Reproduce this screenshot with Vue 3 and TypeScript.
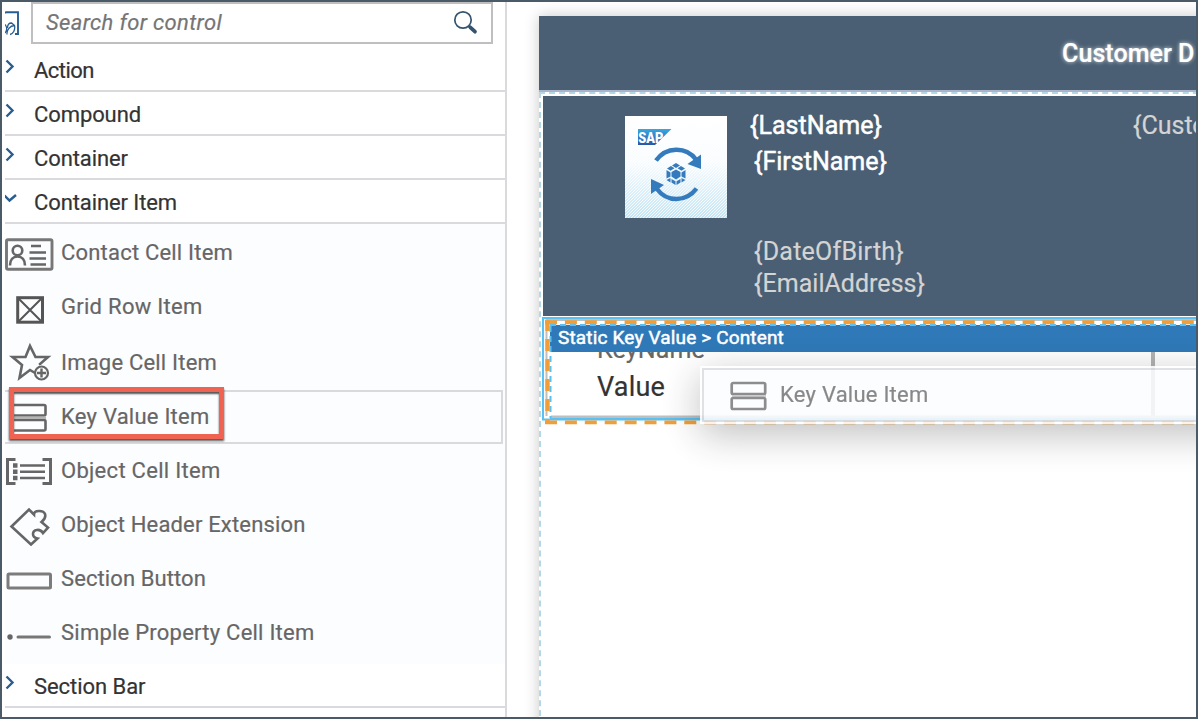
<script setup lang="ts">
interface PaletteItem {
  label: string
  icon: string
  width: number
  active?: boolean
}
interface Group {
  label: string
  width: number
  open?: boolean
  items?: PaletteItem[]
}

const groups: Group[] = [
  { label: 'Action', width: 60 },
  { label: 'Compound', width: 107 },
  { label: 'Container', width: 94 },
  {
    label: 'Container Item',
    width: 143,
    open: true,
    items: [
      { label: 'Contact Cell Item', icon: 'contact', width: 172 },
      { label: 'Grid Row Item', icon: 'grid', width: 141.5 },
      { label: 'Image Cell Item', icon: 'image', width: 156 },
      { label: 'Key Value Item', icon: 'keyvalue', width: 148.5, active: true },
      { label: 'Object Cell Item', icon: 'object', width: 159.5 },
      { label: 'Object Header Extension', icon: 'puzzle', width: 244.5 },
      { label: 'Section Button', icon: 'button', width: 145 },
      { label: 'Simple Property Cell Item', icon: 'simple', width: 253.5 },
    ],
  },
  { label: 'Section Bar', width: 111.5 },
]

/* Tracks a label out so that it fills the given width. */
const vFit = {
  mounted(el: HTMLElement, binding: { value: number }) {
    const count = (el.textContent ?? '').length
    const natural = el.getBoundingClientRect().width
    el.style.letterSpacing = `${(binding.value - natural) / count}px`
  },
}
</script>

<template>
  <div class="frame">
    <aside class="palette">
      <div class="search-row">
        <svg class="palette-icon" width="16" height="28" viewBox="0 0 16 28">
          <path d="M0 3.500Q0 2.200 1.500 2.200H13V24H10" fill="none" stroke="#275e92" stroke-width="1.900" />
          <path d="M0 14.500C2 17 2.500 20 0 23M2 24.500C1.500 20 5 15.500 9.500 15.500C10.500 20 8 24 5 24.500M2.500 18C2.500 14.500 4.500 13 6.500 13L9.500 15.500" fill="none" stroke="#275e92" stroke-width="1.300" />
        </svg>
        <div class="search">
          <span v-fit="176" class="t hint">Search for control</span>
          <svg class="loupe" width="26" height="26" viewBox="0 0 26 26" fill="none" stroke="#34536f">
            <circle cx="10" cy="10" r="8.200" stroke-width="1.700" />
            <path d="M15.500 16L17 17.500" stroke-width="2" />
            <path d="M17.300 17.300L22 21.700" stroke-width="3.700" stroke-linecap="round" />
          </svg>
        </div>
      </div>

      <template v-for="g in groups" :key="g.label">
        <div class="group">
          <svg v-if="g.open" class="chev" width="13" height="16" viewBox="0 0 13 16">
            <path d="M-.5 4.500L4.500 9.500L11 4" fill="none" stroke="#275e92" stroke-width="2.400" />
          </svg>
          <svg v-else class="chev" width="13" height="16" viewBox="0 0 13 16">
            <path d="M1.500 1.500L7.500 7.500L1.500 13.500" fill="none" stroke="#275e92" stroke-width="2.400" />
          </svg>
          <span v-fit="g.width" class="t">{{ g.label }}</span>
        </div>
        <div v-if="g.items" class="items">
          <div v-for="i in g.items" :key="i.label" class="item" :class="{ active: i.active }">
            <svg class="glyph" width="50" height="44" viewBox="0 0 50 44" fill="none" stroke="#666" stroke-width="2.600">
              <g v-if="i.icon === 'contact'">
                <rect x="1.500" y="7.800" width="45.500" height="29.500" rx="1.500" stroke-width="2.900" stroke="#777" />
                <circle cx="12.500" cy="18.500" r="4.800" />
                <path d="M5 33.500C5 28 8 24.500 12.500 24.500S20 28 20 33.500M26 14H36M24.500 20.500H41M24.500 26.500H41M25.500 32.500H41" />
              </g>
              <g v-else-if="i.icon === 'grid'" stroke="#555">
                <rect x="12.700" y="11.700" width="24.800" height="24.500" stroke-width="3" />
                <path d="M13 12L37 36M37 12L13 36" stroke-width="2" />
              </g>
              <path v-else-if="i.icon === 'image'" d="M30 33L25 30L14.500 38L17 25L7.500 17H20.500L25 6L30.500 17H43L35 24L35.500 25" />
              <g v-else-if="i.icon === 'keyvalue'">
                <rect x="7" y="10" width="33.500" height="10.500" rx="1.500" />
                <rect x="7" y="25" width="33.500" height="10.500" rx="1.500" />
                <path d="M8 22.700H41" stroke="#b5b5b5" stroke-width="2.500" />
              </g>
              <g v-else-if="i.icon === 'object'">
                <path d="M10.500 11.500H2.500V35.500H10.500M37.500 11.500H45.500V35.500H37.500" stroke-width="3" />
                <path d="M15 17.500H40M15 23.700H40M15 30H40" />
                <path d="M8 17.500H12.500M8 23.700H12.500M8 30H12.500" stroke-width="4.500" />
              </g>
              <path v-else-if="i.icon === 'puzzle'" d="M6.500 24.500L24 7.500L29 12.500C29 8 38.500 8 40 12C41 15 39 18 36.500 20L43 25.500L38 31C35 26 28 27.500 28 32C28 34.500 30 36 32.500 36.500L26 42.500Z" />
              <rect v-else-if="i.icon === 'button'" x="3" y="18" width="42.500" height="14" rx="1" stroke="#7c7c7c" stroke-width="3" />
              <g v-else>
                <circle cx="5" cy="27" r="1.400" fill="#666" />
                <path d="M13 27H44.500" stroke="#777" stroke-width="3" stroke-linecap="round" />
              </g>
              <g v-if="i.icon === 'image'" stroke-width="2.200">
                <circle cx="36.500" cy="33" r="6.500" />
                <path d="M36.500 28.500V37.500M32 33H41" stroke-width="2.400" />
              </g>
            </svg>
            <span v-fit="i.width" class="t">{{ i.label }}</span>
            <div v-if="i.active" class="callout" />
          </div>
        </div>
      </template>
    </aside>

    <main class="stage">
      <section class="device">
        <header class="title"><b v-fit="110" class="t">Customer</b><b class="t initial">D</b></header>
        <div class="dropzone">
          <div class="object-header">
            <svg class="logo" width="102" height="102" viewBox="0 0 102 102">
              <defs>
                <linearGradient id="fade" x1="0" y1="0" x2="0" y2="1">
                  <stop offset="0" stop-color="#fff" /><stop offset=".45" stop-color="#f8fcff" /><stop offset="1" stop-color="#c4e4f3" />
                </linearGradient>
                <linearGradient id="sap" x1="0" y1="0" x2="0" y2="1">
                  <stop offset="0" stop-color="#36a9e1" /><stop offset="1" stop-color="#2b56a5" />
                </linearGradient>
                <pattern id="hatch" width="3" height="3" patternUnits="userSpaceOnUse">
                  <path d="M-1 1L1 -1M0 3L3 0M2 4L4 2" stroke="#fff" stroke-width="1" opacity=".8" />
                </pattern>
              </defs>
              <rect width="102" height="102" fill="url(#fade)" />
              <rect width="102" height="102" fill="url(#hatch)" />
              <path d="M13 13H46.500L30 29H13Z" fill="url(#sap)" />
              <text x="13.300" y="26.500" class="sap" textLength="25" lengthAdjust="spacingAndGlyphs">SAP</text>
              <g fill="none" stroke="#347bbd" stroke-width="4.500">
                <path d="M31 44.500C41 30.500 61 30 71 43.500" />
                <path d="M71.500 72.500C61 86.500 42 86.500 32 73" />
              </g>
              <g fill="#347bbd">
                <path d="M76 38.500V53L62.500 48Z" />
                <path d="M26 63L39 69L26 78Z" />
                <path d="M51 53.500L55.500 56V60.500L51 63.500L46.500 60.500V56Z" />
                <path d="M51 47L55 49.500L51 52L47 49.500ZM46 50L49.500 52.300L45.500 54.800L42 52.500ZM56 50L60 52.500L56.500 54.800L52.500 52.300ZM41.500 54L45.500 56.500V60.500L41.500 62.500ZM60.500 54V62.500L56.500 60.500V56.500ZM41.500 64L45.500 62V66.500L41.500 64ZM60.500 64L56.500 66.500V62ZM46.500 63L50.500 65.200V69L46.500 66.500ZM55.500 63L51.500 65.200V69L55.500 66.500Z" />
              </g>
            </svg>
            <div class="fields">
              <span v-fit="132" class="t strong first">{LastName}</span>
              <span v-fit="133" class="t strong">{FirstName}</span>
              <span v-fit="150" class="t gap">{DateOfBirth}</span>
              <span v-fit="171" class="t">{EmailAddress}</span>
            </div>
            <span class="t customer">{Customer}</span>
          </div>

          <section class="keyvalue">
            <div class="crumb"><span v-fit="226" class="t">Static Key Value &gt; Content</span></div>
            <div class="cell">
              <span v-fit="108" class="t key">KeyName</span>
              <span v-fit="68" class="t value">Value</span>
              <i class="divider" />
            </div>
            <svg class="outline" width="660" height="110" viewBox="540 316 660 110" fill="none">
              <path d="M1200 318H543V419.500H550" stroke="#58c0f2" stroke-width="2" />
              <path d="M1200 320H546.500V416" stroke="#bfbfbf" stroke-width="2" />
              <path d="M1200 416.800H551" stroke="#bfbfbf" stroke-width="2.400" />
              <path d="M1200 419.300H550" stroke="#58c0f2" stroke-width="2.400" />
              <path d="M545 322.300H1200" stroke="#f29e38" stroke-width="4" stroke-dasharray="12 7.900" />
              <path d="M547.500 320V424" stroke="#f29e38" stroke-width="4.400" stroke-dasharray="12 8" stroke-dashoffset="1" />
              <path d="M545 422.300H1200" stroke="#f29e38" stroke-width="3.800" stroke-dasharray="12 7.900" />
              <path d="M550 325H1200M550.500 326V418" stroke="#58c0f2" stroke-width="2" stroke-dasharray="6 4" />
            </svg>
          </section>
        </div>
      </section>
      <div class="ghost">
        <div class="ghost-body">
          <svg width="38" height="30" viewBox="0 0 38 30" fill="none" stroke="#7d7d80" stroke-width="2.700">
            <rect x="1.700" y="2" width="33.500" height="11" rx="1.500" />
            <path d="M2 15H36" stroke="#c5c5c7" stroke-width="2" />
            <rect x="1.700" y="17" width="33.500" height="11" rx="1.500" />
          </svg>
          <span v-fit="148.5" class="t">Key Value Item</span>
        </div>
      </div>
    </main>
  </div>
</template>

<style>
html,
body {
  overflow: hidden;
}
</style>

<style scoped>
* {
  box-sizing: border-box;
}
.frame {
  position: relative;
  display: flex;
  width: 1198px;
  height: 719px;
  border: 2px solid #4b5a67;
  background: #fff;
  overflow: hidden;
  font-family: Roboto, "Open Sans", sans-serif;
  font-size: 22px;
  color: #333;
}
.t {
  display: inline-block;
  flex: none;
  white-space: nowrap;
  line-height: 30px;
  -webkit-text-stroke: 0.2px currentColor;
}
.palette {
  width: 505px;
  flex: none;
  padding-left: 3px;
  border-right: 2px solid #d9d9de;
}
.search-row {
  display: flex;
  height: 46px;
}
.palette-icon {
  flex: none;
  margin: 8px 10px 0 0;
}
.search {
  display: flex;
  justify-content: space-between;
  width: 462px;
  height: 42px;
  padding: 4px 12px 0 13px;
  border: 2px solid #bfbfbf;
}
.hint {
  font-style: italic;
  color: #757575;
}
.loupe {
  margin-top: 2px;
}
.group {
  display: flex;
  height: 44px;
  padding-top: 8px;
  border-bottom: 2px solid #d9d9de;
}
.chev {
  flex: none;
  margin-right: 16px;
  margin-top: 3px;
}
.items {
  height: 440px;
  padding-top: 4px;
  background: #fcfdff;
}
.item {
  position: relative;
  display: flex;
  height: 54px;
  margin-right: 2px;
  color: #666;
}
.item .t {
  margin: 10px 0 0 6px;
}
.item:nth-child(n + 3) .t {
  margin-top: 12px;
}
.item .glyph {
  flex: none;
  margin-top: 4px;
  filter: blur(0.4px);
}
.item.active {
  border: 2px solid #d9d9de;
  border-left: 0;
}
.item.active:nth-child(n + 3) .t {
  margin-top: 10px;
}
.item.active .glyph {
  margin-top: 3px;
}
.callout {
  position: absolute;
  left: 4px;
  top: -5px;
  width: 215px;
  height: 52px;
  border: 5px solid #ee6352;
  box-shadow: 0 2px 2px #555, inset 0 2px 2px #555;
}
.stage {
  position: relative;
  flex: 1;
  min-width: 0;
  padding: 14px 0 0 32px;
  overflow: hidden;
}
.device {
  width: 700px;
  height: 740px;
  background: #fff;
  box-shadow: 0 0 14px rgba(0, 0, 0, 0.22);
}
.title {
  display: flex;
  height: 76px;
  padding: 23px 0 0 523px;
  border-bottom: 2px solid #a9b4ca;
  background: #4a5f73;
  color: #fff;
  font-size: 25px;
  text-shadow: 0 0 4px rgba(255, 255, 255, 0.8);
}
.title b {
  font-weight: 500;
}
.title .initial {
  margin-left: 6px;
}
.dropzone {
  height: 664px;
  padding: 2px 0 0 2px;
  border: 2px dashed #b3d8e7;
}
.object-header {
  display: flex;
  height: 220px;
  padding: 20px 0 0 82px;
  background: #4a5f73;
  color: #d4d4d4;
  font-size: 25px;
}
.logo {
  flex: none;
}
.sap {
  font: 900 14.5px Roboto, sans-serif;
  fill: #fff;
}
.fields {
  display: flex;
  flex: none;
  flex-direction: column;
  align-items: flex-start;
  width: 404px;
  padding-left: 27px;
  margin-top: -5px;
}
.fields .t {
  line-height: 32px;
}
.fields .strong {
  color: #fff;
  line-height: 36px;
  -webkit-text-stroke-width: 0.5px;
}
.fields .first {
  margin: -3px 0 0 -4px;
}
.fields .gap {
  margin-top: 56px;
}
.customer {
  margin-top: -5px;
  margin-left: 2px;
}
.keyvalue {
  position: relative;
  height: 108px;
  padding: 9px 0 0 7px;
}
.crumb {
  position: relative;
  z-index: 1;
  height: 27px;
  padding-left: 8px;
  background: #2f79b8;
  color: #fff;
  font-size: 19px;
}
.crumb .t {
  line-height: 25px;
  -webkit-text-stroke-width: 0.5px;
}
.cell {
  position: relative;
  display: flex;
  flex-direction: column;
  align-items: flex-start;
  height: 64px;
  padding-left: 47px;
}
.key {
  margin-top: -17px;
  color: #666;
  font-size: 25px;
}
.value {
  margin-top: 7px;
  font-size: 27px;
}
.divider {
  position: absolute;
  left: 601px;
  top: 0;
  width: 4px;
  height: 64px;
  background: #b3b3b3;
}
.outline {
  position: absolute;
  z-index: 2;
  left: -3px;
  top: 0;
}
.ghost {
  position: absolute;
  z-index: 3;
  left: 193px;
  top: 364px;
  width: 600px;
  height: 58px;
  padding: 2px;
  background: #fff;
  opacity: 0.87;
  box-shadow: 0 10px 40px rgba(0, 0, 0, 0.3);
}
.ghost-body {
  display: flex;
  height: 54px;
  padding: 11px 0 0 26px;
  border: 2px solid #dcdde2;
  background: #fcfdff;
  color: #777;
}
.ghost-body .t {
  margin-left: 12px;
  margin-top: -1px;
}
</style>
